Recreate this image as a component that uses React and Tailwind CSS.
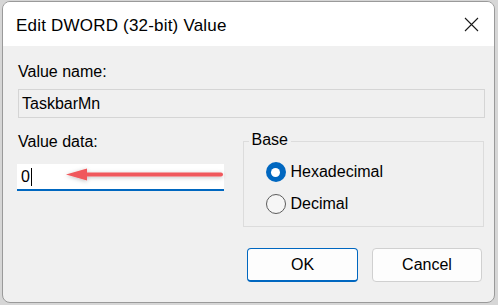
export default function App() {
  return (
    <div className="w-[498px] h-[305px] bg-[#d6d6d6] pl-[2px] pt-[1px] overflow-hidden" style={{ fontFamily: '"Liberation Sans", Arial, sans-serif' }}>
      <div className="w-[493px] h-[302px] rounded-[8px] border border-[#9a9a9a] bg-[#f0f0f0] overflow-hidden flex flex-col text-[16px] text-black">
        {/* Title bar */}
        <div className="h-[44px] bg-white flex items-center justify-between pl-[13px] pr-[14px] shrink-0">
          <span className="text-[17px] tracking-[0.2px] pt-[3px]">Edit DWORD (32-bit) Value</span>
          <svg width="15" height="15" viewBox="0 0 15 15" className="mr-[1px]">
            <path d="M1 1 L14 14 M14 1 L1 14" stroke="#1a1a1a" strokeWidth="1.1" fill="none" />
          </svg>
        </div>

        {/* Body */}
        <div className="flex flex-col pl-[15px] pr-[10px] pt-[16px]">
          <div className="leading-[20px]">Value name:</div>
          <div className="mt-[7px] h-[29px] w-[467px] border border-[#d5d5d5] bg-[#f0f0f0] flex items-center pl-[3px]">
            TaskbarMn
          </div>

          <div className="flex mt-[12px]">
            <div className="flex flex-col w-[222px]">
              <div className="leading-[20px] mt-[2px]">Value data:</div>
              <div className="relative mt-[12px] h-[27px] w-[207px] bg-white border-b-2 border-[#0067c0] flex items-center pl-[4px] -ml-[1px]">
                <span>0</span>
                <span className="w-[1px] h-[18px] bg-black ml-[1px]" />
                <svg className="absolute left-[24px] top-[-1px]" width="190" height="26" viewBox="0 0 190 26">
                  <defs>
                    <filter id="sh" x="-10%" y="-100%" width="120%" height="300%">
                      <feDropShadow dx="0" dy="1" stdDeviation="2" floodColor="#000" floodOpacity="0.25" />
                    </filter>
                  </defs>
                  <g filter="url(#sh)">
                    <path d="M40 11.5 L180 11.5" stroke="#f0585b" strokeWidth="4" strokeLinecap="round" />
                    <path d="M25 11.5 L46 5.5 L46 17.5 Z" fill="#f0585b" />
                  </g>
                </svg>
              </div>
            </div>

            <div className="relative ml-[3px] mt-[11px] w-[242px] h-[86px] border border-[#dcdcdc]">
              <span className="absolute -top-[12px] left-[5px] bg-[#f0f0f0] px-[3px] leading-[20px]">Base</span>
              <div className="flex flex-col pl-[22px] pt-[20px] gap-[12px]">
                <div className="flex items-center gap-[5px]">
                  <span className="w-[20px] h-[20px] rounded-full bg-[#0067c0] flex items-center justify-center">
                    <span className="w-[9px] h-[9px] rounded-full bg-white" />
                  </span>
                  <span className="leading-[20px]">Hexadecimal</span>
                </div>
                <div className="flex items-center gap-[5px]">
                  <span className="w-[20px] h-[20px] rounded-full border border-[#5c5c5c] bg-[#f6f6f6]" />
                  <span className="leading-[20px]">Decimal</span>
                </div>
              </div>
            </div>
          </div>

          <div className="flex justify-end gap-[14px] mt-[21px] pr-[2px]">
            <button className="w-[111px] h-[34px] rounded-[4px] bg-[#fdfdfd] border border-[#0067c0] border-b-2 text-[16px]">OK</button>
            <button className="w-[110px] h-[34px] rounded-[4px] bg-[#fdfdfd] border border-[#d0d0d0] text-[16px]">Cancel</button>
          </div>
        </div>
      </div>
    </div>
  );
}
